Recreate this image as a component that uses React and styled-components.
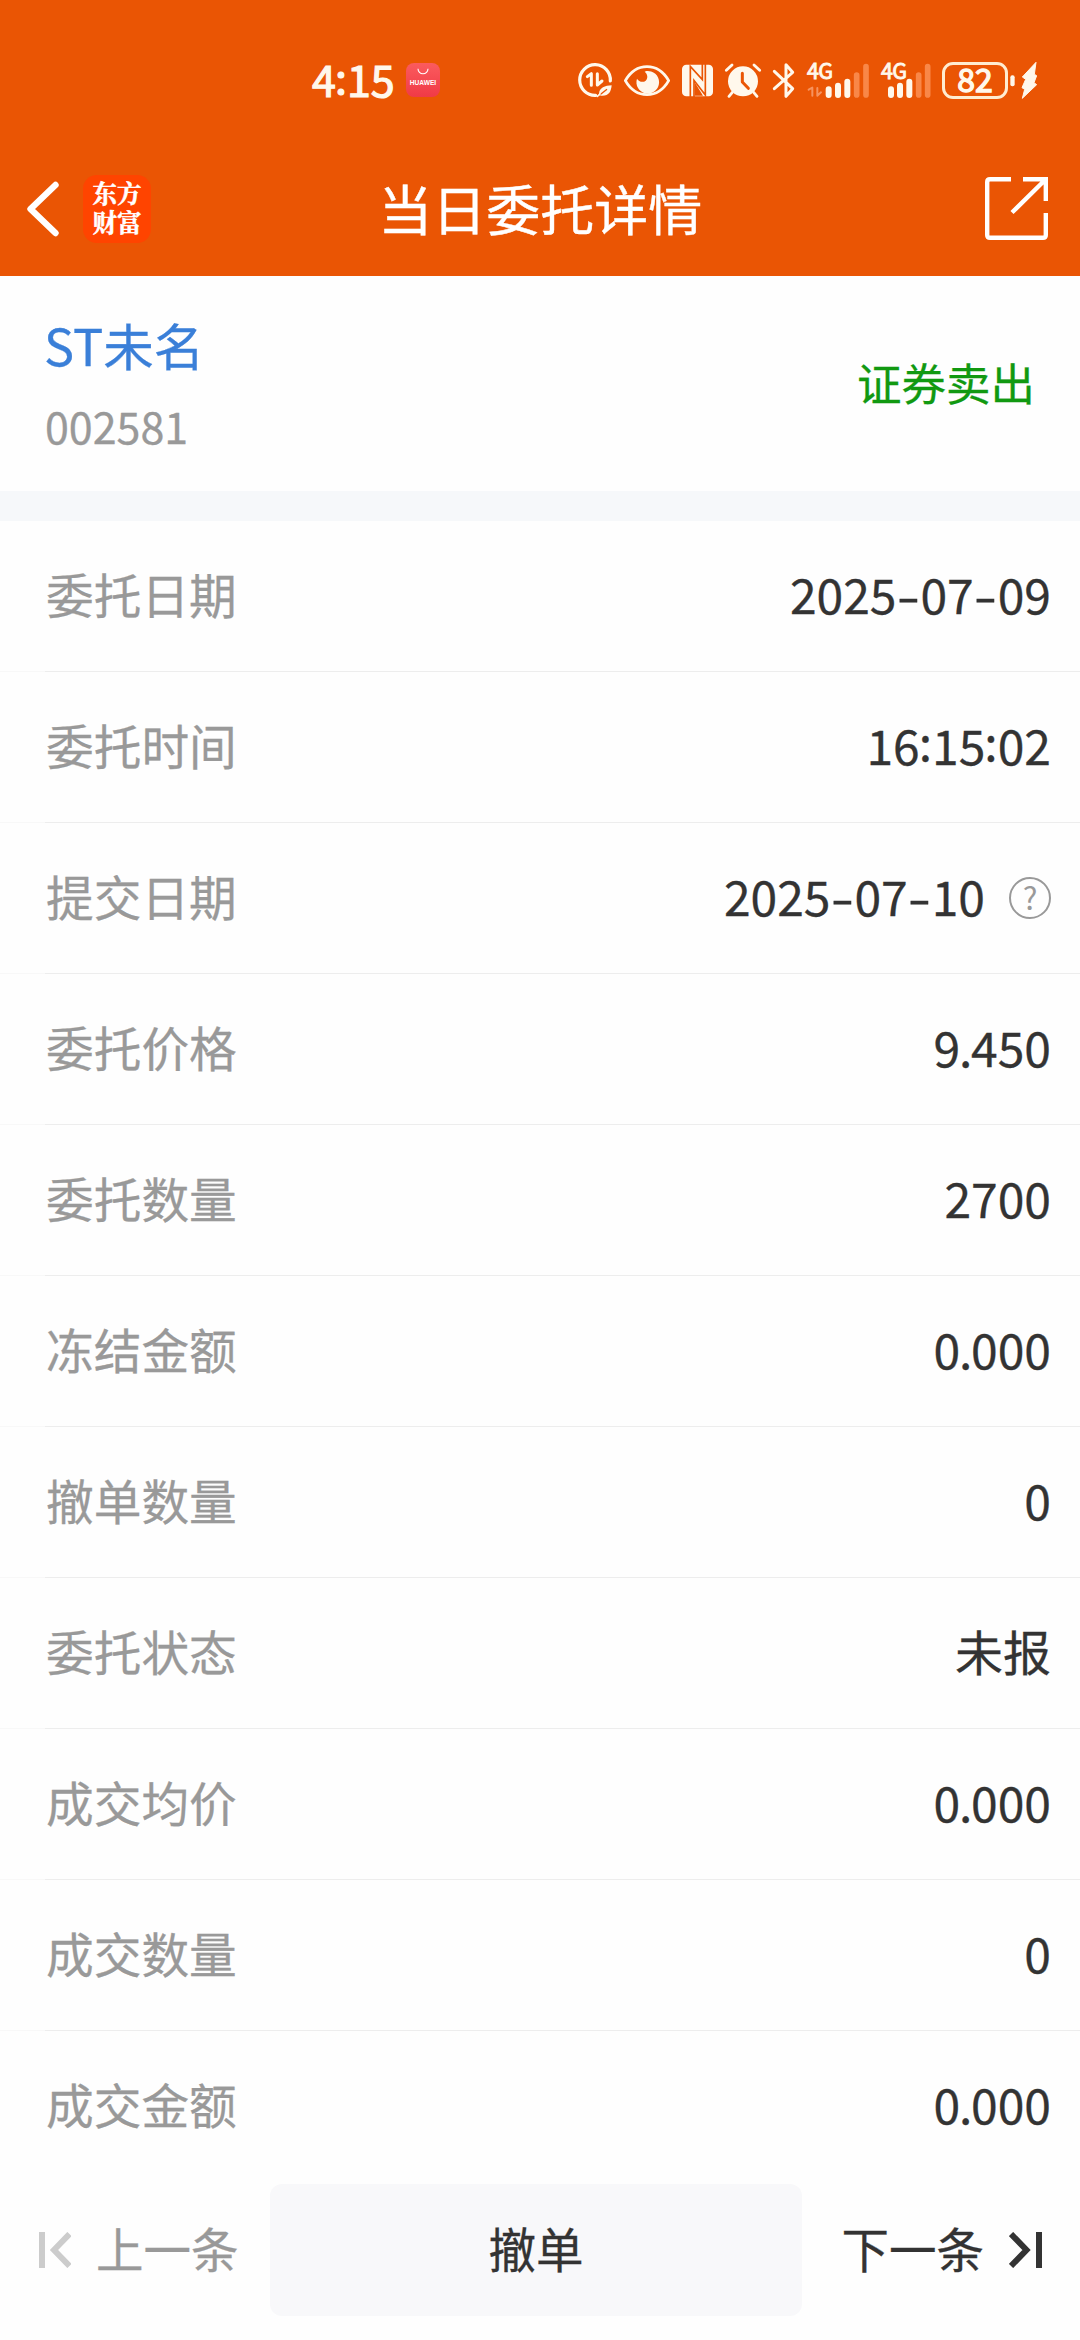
import React from 'react';
import styled, { createGlobalStyle } from 'styled-components';

const pedido = [
  { label: '委托日期', value: '2025-07-09' },
  { label: '委托时间', value: '16:15:02' },
  { label: '提交日期', value: '2025-07-10', help: true },
  { label: '委托价格', value: '9.450' },
  { label: '委托数量', value: '2700' },
  { label: '冻结金额', value: '0.000' },
  { label: '撤单数量', value: '0' },
  { label: '委托状态', value: '未报' },
  { label: '成交均价', value: '0.000' },
  { label: '成交数量', value: '0' },
  { label: '成交金额', value: '0.000' },
];

// the separators get their own widths, the digits keep the font's
function Valor({ children }) {
  return children.split('').map((c, i) => {
    if (c === '-') return <Dash key={i}><span>-</span></Dash>;
    if (c === ':') return <Colon key={i}>:</Colon>;
    if (c === '.') return <Dot key={i}>.</Dot>;
    return c;
  });
}

// status bar icons share a 3x grid: 120 units high = 40px
function StatusIcon({ x, w, children }) {
  return (
    <svg width={w / 3} height="40" viewBox={`${x} 45 ${w} 120`} fill="none" stroke="#fff8ec">
      {children}
    </svg>
  );
}

function StatusIcons() {
  return (
    <IconsRow>
      <StatusIcon x={48} w={138}>
        <path d="M104 151 A46 46 0 1 1 148 108" strokeWidth="9.5" strokeLinecap="round" />
        <path d="M79 95 L91 86 V121" strokeWidth="9" strokeLinejoin="round" strokeLinecap="round" />
        <path d="M109 86 V120 L123 108" strokeWidth="9" strokeLinejoin="round" strokeLinecap="round" />
        <path d="M152 121 C132 122 115 128 114 146 C114 149 116 151 120 152 C142 154 150 142 152 121 Z" fill="#fff8ec" stroke="none" />
        <path d="M116 150 L138 133" stroke="#ea5504" strokeWidth="4" />
        <path d="M109 154 L117 147" strokeWidth="5" strokeLinecap="round" />
      </StatusIcon>
      <StatusIcon x={186} w={174}>
        <path d="M193 107 C208 81 232 65 258 65 C284 65 308 81 323 107 C308 133 284 149 258 149 C232 149 208 133 193 107 Z" strokeWidth="8.5" strokeLinejoin="round" />
        <path d="M256 78 A34 34 0 1 1 228 101 C233 110 246 114 254 107 C262 99 260 87 251 80 Z" fill="#fff8ec" stroke="none" />
      </StatusIcon>
      <StatusIcon x={360} w={129}>
        <rect x="363" y="59" width="93" height="95" rx="13" fill="#fff8ec" stroke="none" />
        <path d="M388 156 V64 L424 104 V57" strokeWidth="5" stroke="#ea5504" />
        <path d="M433 57 V150 L399 106 V156" strokeWidth="5" stroke="#ea5504" />
        <path d="M401 112 V152 H426 Z" fill="#ea5504" stroke="none" />
      </StatusIcon>
      <StatusIcon x={489} w={144}>
        <circle cx="546" cy="109" r="45" fill="#fff8ec" stroke="none" />
        <path d="M544 85 V111 L562 130" stroke="#ea5504" strokeWidth="9" strokeLinecap="round" strokeLinejoin="round" />
        <path d="M496 76 L513 60 M579 60 L596 76 M514 142 L504 154 M578 142 L588 154" strokeWidth="8.5" strokeLinecap="round" />
      </StatusIcon>
      <StatusIcon x={633} w={102}>
        <path d="M640 79 L695 131 L675 154 V59 L695 82 L640 131" strokeWidth="9" strokeLinejoin="round" strokeLinecap="round" />
      </StatusIcon>
      <Sinal $width={74}>
        <RedeLabel>4G</RedeLabel>
        <svg width="63" height="40" viewBox="45 45 189 120" fill="none" strokeLinecap="round">
          <path d="M53 134 L64 128 V152 M79 129 V152 L90 142" stroke="#f6935f" strokeWidth="6" strokeLinejoin="round" />
          <path d="M113 133 V150 M141 122 V150 M169 110 V150" stroke="#fff8ec" strokeWidth="18" />
          <path d="M197 90 V150 M225 65 V150" stroke="#f98748" strokeWidth="17" />
        </svg>
      </Sinal>
      <Sinal $width={62}>
        <RedeLabel>4G</RedeLabel>
        <svg width="52" height="40" viewBox="268 45 156 120" fill="none" strokeLinecap="round">
          <path d="M301 133 V150 M328 122 V150 M356 110 V150" stroke="#fff8ec" strokeWidth="18" />
          <path d="M384 90 V150 M411 65 V150" stroke="#f98748" strokeWidth="17" />
        </svg>
      </Sinal>
      <Bateria>82</Bateria>
      <svg width="27" height="40" viewBox="660 45 81 120">
        <rect x="661" y="91" width="13" height="33" rx="6" fill="#fff8ec" />
        <path d="M740 52 L699 96 L709 103 L698 128 L706 133 L699 160 L742 119 L734 113 L742 92 L735 88 Z" fill="#fff8ec" stroke="#fff8ec" strokeWidth="3" strokeLinejoin="round" transform="translate(-2 0)" />
      </svg>
    </IconsRow>
  );
}

function App() {
  return (
    <>
      <GlobalStyle />
      <Tela>
        <Topo>
          <StatusBar>
            <Hora>4<span>:</span>15</Hora>
            <Notificacao>
              <svg width="12" height="7" viewBox="0 0 12 7" fill="none" stroke="#fff" strokeWidth="1.1">
                <path d="M1 0.8 A5 5 0 0 0 11 0.8" />
              </svg>
              <span>HUAWEI</span>
            </Notificacao>
            <StatusIcons />
          </StatusBar>
          <NavBar>
            <NavLeft>
              <svg width="34" height="56" viewBox="0 0 34 56" fill="none" stroke="#fff" strokeWidth="6.4" strokeLinecap="round" strokeLinejoin="round">
                <path d="M29.5 4 L4.5 28 L29.5 52" />
              </svg>
              <Logo>东方<br />财富</Logo>
            </NavLeft>
            <Titulo>当日委托详情</Titulo>
            <svg width="63" height="63" viewBox="0 0 63 63" fill="none" stroke="#fff" strokeWidth="4.4">
              <path d="M26 2.2 H5 Q2.2 2.2 2.2 5 V58 Q2.2 60.8 5 60.8 H58 Q60.8 60.8 60.8 58 V36" />
              <path d="M38 2.2 H60.8 V24 M60 3 L27 35.5" />
            </svg>
          </NavBar>
        </Topo>
        <Ativo>
          <div>
            <Nome>ST未名</Nome>
            <Codigo>002581</Codigo>
          </div>
          <Operacao>证券卖出</Operacao>
        </Ativo>
        <Lista>
          {pedido.map((item) => (
            <Linha key={item.label}>
              <Label>{item.label}</Label>
              <Texto>
                <Valor>{item.value}</Valor>
                {item.help && <Ajuda>?</Ajuda>}
              </Texto>
            </Linha>
          ))}
        </Lista>
        <Rodape>
          <BotaoNav disabled>
            <svg width="33" height="36" viewBox="0 0 33 36" fill="none" stroke="#ccc" strokeWidth="6">
              <path d="M4 0 V36 M31.5 2 L16 18 L31.5 34" />
            </svg>
            <span>上一条</span>
          </BotaoNav>
          <BotaoCancelar><span>撤单</span></BotaoCancelar>
          <BotaoNav $right>
            <span>下一条</span>
            <svg width="33" height="36" viewBox="0 0 33 36" fill="none" stroke="#333" strokeWidth="6">
              <path d="M30 0 V36 M2 2 L17.5 18 L2 34" />
            </svg>
          </BotaoNav>
        </Rodape>
      </Tela>
    </>
  );
}

// - estilos da pagina

const GlobalStyle = createGlobalStyle`
  body {
    margin: 0;
    background: #fefefe;
    font-family: 'Noto Sans CJK SC', 'Noto Sans', sans-serif;
  }

  svg {
    display: block;
    flex-shrink: 0;
  }
`;

const Tela = styled.div`
  width: 1080px;
  height: 2340px;
  display: flex;
  flex-direction: column;
  overflow: hidden;
  background: #fefefe;
`;

const Topo = styled.header`
  height: 276px;
  background: #ea5504;
  color: #fff;
`;

const StatusBar = styled.div`
  height: 162px;
  box-sizing: border-box;
  padding: 0 40px 0 312px;
  display: flex;
  align-items: center;
`;

const Hora = styled.div`
  width: 94px;
  padding-bottom: 9px;
  font-size: 43px;
  font-weight: 400;
  line-height: 50px;
  color: #fff8ec;
  -webkit-text-stroke: 1.2px #fff8ec;

  span {
    display: inline-block;
    width: 10px;
    margin-right: 1px;
    vertical-align: 3px;
    text-indent: -1px;
  }
`;

const Notificacao = styled.div`
  width: 34px;
  height: 34px;
  border-radius: 8px;
  background: linear-gradient(#fb5b5e, #f03a46);
  display: flex;
  flex-direction: column;
  align-items: center;
  margin: 0 137px 2px 0;
  flex-shrink: 0;

  svg {
    margin-top: 5px;
  }

  span {
    margin-top: 4px;
    font: bold 6.6px/7px 'Liberation Sans', sans-serif;
  }
`;

const IconsRow = styled.div`
  height: 40px;
  padding-bottom: 2px;
  display: flex;
  align-items: center;
`;

const Sinal = styled.div`
  position: relative;
  width: ${(props) => props.$width}px;
  height: 40px;
  flex-shrink: 0;
`;

const RedeLabel = styled.span`
  position: absolute;
  left: 1px;
  top: 1px;
  font: 400 21.5px/18px 'Noto Sans CJK SC', sans-serif;
  letter-spacing: -0.8px;
  color: #fff8ec;
  -webkit-text-stroke: 0.9px #fff8ec;
`;

const Bateria = styled.div`
  width: 66px;
  height: 37px;
  box-sizing: border-box;
  border: 3px solid #ffecd0;
  border-radius: 11px;
  margin-right: 2px;
  flex-shrink: 0;
  text-align: center;
  font-size: 32px;
  font-weight: 400;
  line-height: 27px;
  color: #fff8ec;
  -webkit-text-stroke: 1.3px #fff8ec;
`;

const NavBar = styled.div`
  height: 93px;
  padding: 0 32.5px 0 33px;
  display: grid;
  grid-template-columns: 1fr auto 1fr;
  align-items: center;

  > svg {
    justify-self: end;
  }
`;

const NavLeft = styled.div`
  display: flex;
  align-items: center;
  gap: 23px;
  margin-left: -7px;
`;

const Logo = styled.div`
  width: 68px;
  height: 68px;
  box-sizing: border-box;
  padding-top: 3px;
  border-radius: 14px;
  background: #ff4400;
  text-align: center;
  font-family: 'Noto Serif CJK SC', 'Noto Sans CJK SC', sans-serif;
  font-size: 24.5px;
  font-weight: bold;
  line-height: 29px;
  -webkit-text-stroke: 0.5px #fff;
`;

const Titulo = styled.h1`
  margin: 0;
  padding-bottom: 1px;
  font-size: 54px;
  font-weight: normal;
  line-height: 64px;
  -webkit-text-stroke: 0.4px #fff;
`;

const Ativo = styled.section`
  height: 215px;
  box-sizing: border-box;
  padding: 33px 45px 0 45px;
  display: flex;
  justify-content: space-between;
`;

const Nome = styled.div`
  font-size: 50.5px;
  line-height: 70px;
  color: #3a7fd8;
  text-indent: -1px;
  -webkit-text-stroke: 0.3px #3a7fd8;
`;

const Codigo = styled.div`
  margin-top: 11px;
  font-size: 43px;
  line-height: 70px;
  color: #999;
  -webkit-text-stroke: 0.3px #999;
`;

const Operacao = styled.div`
  margin-top: 38px;
  font-size: 44.5px;
  line-height: 70px;
  color: #119911;
  -webkit-text-stroke: 0.3px #119911;
`;

const Lista = styled.main`
  border-top: 30px solid #f6f8fa;
  height: 1649px;
  overflow: hidden;
`;

const Linha = styled.div`
  height: 151px;
  box-sizing: border-box;
  padding: 0 29px 7px 46px;
  display: flex;
  align-items: center;
  justify-content: space-between;
  background: linear-gradient(90deg, #f8f8f8 45px, #ededed 45px) bottom / 100% 1px no-repeat;
`;

const Label = styled.span`
  padding-top: 2px;
  font-size: 47.7px;
  line-height: 70px;
  color: #999;
  -webkit-text-stroke: 0.3px #999;
`;

const Texto = styled.span`
  display: flex;
  align-items: center;
  font-size: 48px;
  line-height: 70px;
  color: #333;
  -webkit-text-stroke: 0.3px #333;
`;

const Dash = styled.span`
  width: 24px;
  display: flex;
  justify-content: center;

  span {
    transform: scaleX(1.4);
  }
`;

const Colon = styled.span`
  width: 12.4px;
  margin-top: -9px;
  text-indent: -1px;
`;

const Dot = styled.span`
  width: 11px;
  text-indent: -1px;
`;

const Ajuda = styled.span`
  width: 42px;
  height: 42px;
  box-sizing: border-box;
  border: 2px solid #999;
  border-radius: 50%;
  margin: 6px 0 0 24px;
  text-align: center;
  font-size: 31px;
  line-height: 35px;
  color: #999;
  -webkit-text-stroke: 0;
`;

const Rodape = styled.footer`
  height: 170px;
  box-sizing: border-box;
  padding: 14px 38px 24px;
  display: grid;
  grid-template-columns: 232px 532px 1fr;
  background: #fefefe;
`;

const BotaoBase = styled.button`
  border: none;
  padding: 0;
  font-family: inherit;
  font-size: 47.5px;
  color: #333;
  -webkit-text-stroke: 0.3px currentColor;

  span {
    display: block;
    padding-bottom: 6px;
  }
`;

const BotaoNav = styled(BotaoBase)`
  display: flex;
  align-items: center;
  justify-content: ${(props) => (props.$right ? 'flex-end' : 'flex-start')};
  gap: 25px;
  background: none;

  &:disabled {
    color: #999;
  }
`;

const BotaoCancelar = styled(BotaoBase)`
  border-radius: 12px;
  background: #f8f8fa;
`;

export default App;
